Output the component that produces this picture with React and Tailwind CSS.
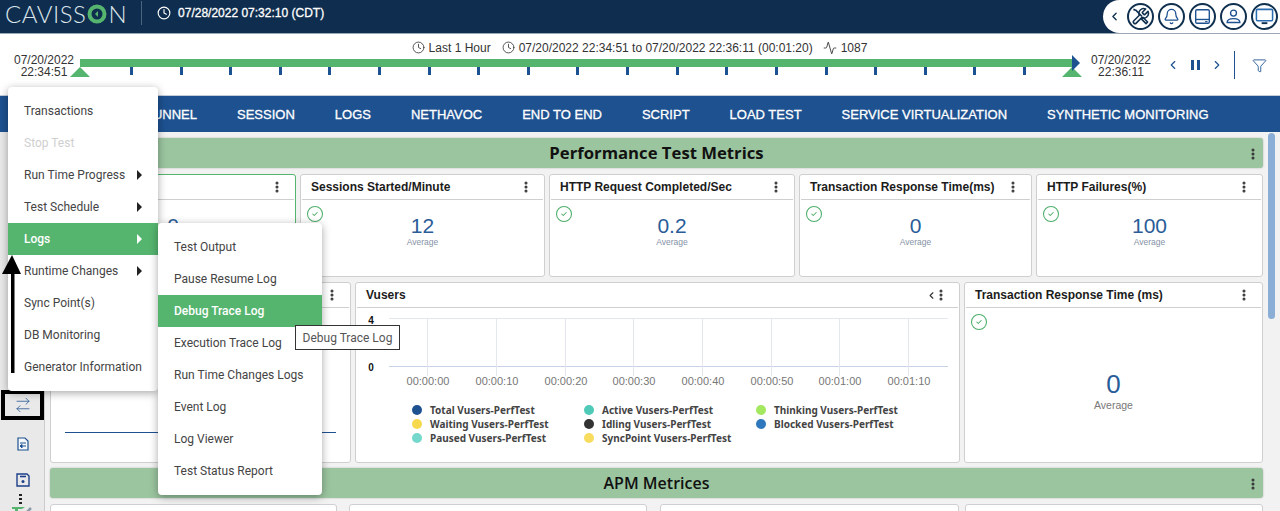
import { Activity, Bell, ChevronLeft, ChevronRight, CircleCheck, Clock, EllipsisVertical, Funnel, ArrowRightLeft } from "lucide-react";

const navItems = ["TUNNEL", "SESSION", "LOGS", "NETHAVOC", "END TO END", "SCRIPT", "LOAD TEST", "SERVICE VIRTUALIZATION", "SYNTHETIC MONITORING"];
const mainMenu = [
  { label: "Transactions" },
  { label: "Stop Test", disabled: true },
  { label: "Run Time Progress", arrow: true },
  { label: "Test Schedule", arrow: true },
  { label: "Logs", arrow: true, active: true },
  { label: "Runtime Changes", arrow: true },
  { label: "Sync Point(s)" },
  { label: "DB Monitoring" },
  { label: "Generator Information" },
];
const logMenu = [
  { label: "Test Output" },
  { label: "Pause Resume Log" },
  { label: "Debug Trace Log", active: true },
  { label: "Execution Trace Log" },
  { label: "Run Time Changes Logs" },
  { label: "Event Log" },
  { label: "Log Viewer" },
  { label: "Test Status Report" },
];
const legend = [
  ["Total Vusers-PerfTest", "bg-[#1d5190]"],
  ["Active Vusers-PerfTest", "bg-[#4fc9b8]"],
  ["Thinking Vusers-PerfTest", "bg-[#a4e85f]"],
  ["Waiting Vusers-PerfTest", "bg-[#f7d94e]"],
  ["Idling Vusers-PerfTest", "bg-[#333333]"],
  ["Blocked Vusers-PerfTest", "bg-[#2f78bd]"],
  ["Paused Vusers-PerfTest", "bg-[#74d8cc]"],
  ["SyncPoint Vusers-PerfTest", "bg-[#f7dc60]"],
];
const gridX = [426, 495, 564, 632, 701, 770, 838, 907];
const times = ["00:00:00", "00:00:10", "00:00:20", "00:00:30", "00:00:40", "00:00:50", "00:01:00", "00:01:10"];

const Dots = ({ className = "" }) => (
  <EllipsisVertical size={14} strokeWidth={3.2} className={"text-[#333] " + className} />
);

const Card = ({ title, width, height, green, children, extra }) => (
  <div className={`${width} ${height} shrink-0 bg-white rounded-[3px] border overflow-hidden ${green ? "border-[#55b56f]" : "border-[#cfcfcf]"}`}>
    <div className="h-[25px] mx-px flex items-center justify-between pl-[9px] pr-[10px] border-b border-[#cfcfcf]">
      <span className="text-xs font-bold text-[#1c1c1c] whitespace-nowrap">{title}</span>
      <div className="flex items-center">
        {extra}
        <Dots />
      </div>
    </div>
    {children}
  </div>
);

const Metric = ({ title, value, width, green }) => (
  <Card title={title} width={width} height="h-[103px]" green={green}>
    <div className="relative h-[76px] flex flex-col items-center pt-[14px]">
      <CircleCheck size={18} strokeWidth={1.4} className="absolute left-[5px] top-[5px] text-[#4cae6a]" />
      <span className="text-[21px] leading-[24px] text-[#2a5c98]">{value}</span>
      <span className="text-[8.500px] leading-[10px] mt-[-1px] text-[#8592a6]">Average</span>
    </div>
  </Card>
);

const SectionBar = ({ title, bold }) => (
  <div className="relative h-[30px] shrink-0 rounded-[3px] bg-[#9bc59f] flex items-center justify-center shadow-[0_0_2px_rgba(0,0,0,0.25)]">
    <span className={`font-['Open_Sans',sans-serif] text-[#111] ${bold ? "font-bold text-[16.700px]" : "font-semibold text-base"}`}>{title}</span>
    <Dots className="absolute right-[3px] top-[9px]" />
  </div>
);

const MenuList = ({ items, className }) => (
  <div className={"absolute z-20 bg-white rounded-[4px] py-2 shadow-[0_2px_8px_rgba(0,0,0,0.35)] font-['Roboto',sans-serif] text-xs " + className}>
    {items.map((item) => (
      <div
        key={item.label}
        className={`h-8 flex items-center justify-between pl-4 pr-4 whitespace-nowrap ${item.active ? "bg-[#55b56f] text-white font-medium" : item.disabled ? "text-[#cfcfcf]" : "text-[#444]"}`}
      >
        <span>{item.label}</span>
        {item.arrow && <span className={`w-0 h-0 border-y-[5px] border-y-transparent border-l-[5px] ${item.active ? "border-l-white" : "border-l-[#222]"}`} />}
      </div>
    ))}
  </div>
);

const Round = ({ children }) => (
  <div className="w-[27px] h-[27px] rounded-full border-2 border-[#10304f] flex items-center justify-center">{children}</div>
);

const Header = () => (
  <header className="h-[34px] shrink-0 bg-[#0f2d4e] border-b border-[#9aa7b5] flex items-start text-white">
    <div className="ml-[5px] h-[28px] flex items-center font-['Lato',sans-serif] font-light text-[24px] tracking-[0.5px] text-[#dbe6ea] leading-[28px] whitespace-nowrap">
      <span>CAVISS</span>
      <svg width="20" height="20" viewBox="0 0 20 20" className="mx-[1px] shrink-0">
        <circle cx="10" cy="10" r="7.500" fill="none" stroke="#55b56f" strokeWidth="4" />
        <circle cx="10" cy="10" r="3.500" fill="#0f2d4e" />
        <path d="M11 7l-3 3 3 3z" fill="#55b56f" />
      </svg>
      <span>N</span>
    </div>
    <div className="ml-[14px] mt-px w-px h-6 bg-[#4b6480]" />
    <Clock size={14} strokeWidth={2} className="ml-[15px] mt-[6px]" />
    <span className="ml-[7px] mt-[5px] text-xs leading-[16px] [-webkit-text-stroke:0.3px_white]">07/28/2022 07:32:10 (CDT)</span>
    <div className="ml-auto h-[33px] pl-[5px] pr-[2px] bg-white rounded-l-[17px] flex items-center gap-1">
      <ChevronLeft size={13} strokeWidth={2.5} className="text-[#10304f] mr-[2px]" />
      <Round>
        <svg width="19" height="19" viewBox="0 0 24 24" fill="none" stroke="#10304f" strokeWidth="2" strokeLinejoin="round">
          <path d="M14.7 6.3a1 1 0 0 0 0 1.4l1.6 1.6a1 1 0 0 0 1.4 0l3.77-3.77a6 6 0 0 1-7.94 7.94l-6.91 6.91a2.12 2.12 0 0 1-3-3l6.91-6.91a6 6 0 0 1 7.94-7.94l-3.76 3.76z" />
          <path d="M3 3l3 1 8 8M15 13l6 6-2 2-6-6z" />
        </svg>
      </Round>
      <Round>
        <Bell size={17} strokeWidth={1.8} className="text-[#1d5190]" />
      </Round>
      <Round>
        <svg width="17" height="17" viewBox="0 0 20 20" fill="none" stroke="#1d5190" strokeWidth="1.6">
          <rect x="2" y="2" width="16" height="16" rx="1.500" />
          <path d="M2 13.500h16" />
          <path d="M13 16h3" strokeWidth="1.2" />
        </svg>
      </Round>
      <Round>
        <svg width="17" height="17" viewBox="0 0 20 20" fill="none" stroke="#1d5190" strokeWidth="1.6">
          <circle cx="10" cy="6" r="3.500" />
          <path d="M2.500 17c0-3 3-4.500 7.500-4.500s7.500 1.500 7.500 4.500z" />
        </svg>
      </Round>
      <Round>
        <svg width="19" height="19" viewBox="0 0 20 20" fill="none" stroke="#2a6cb0" strokeWidth="1.6">
          <rect x="1.500" y="2.500" width="17" height="12" rx="1" />
          <path d="M7 17h6" stroke="#10304f" strokeWidth="2" />
        </svg>
      </Round>
    </div>
  </header>
);

const Timeline = () => (
  <section className="relative h-[62px] shrink-0 bg-white border-b border-[#c4ccd6] text-xs text-[#333]">
    <div className="h-6 pt-[3px] pr-[1px] flex items-center justify-center">
      <Clock size={13} strokeWidth={1.5} />
      <span className="ml-[4px]">Last 1 Hour</span>
      <Clock size={13} strokeWidth={1.5} className="ml-[11px]" />
      <span className="ml-[4px]">07/20/2022 22:34:51 to 07/20/2022 22:36:11 (00:01:20)</span>
      <Activity size={14} strokeWidth={1.5} className="ml-[10px]" />
      <span className="ml-[4px]">1087</span>
    </div>
    <div className="flex items-start">
      <div className="w-[80px] pl-[8px] text-center leading-[12px] mt-[-4px]">07/20/2022<br />22:34:51</div>
      <div className="relative w-[992px] mt-px">
        <div className="h-2 bg-[#55b56f]" />
        <div className="flex justify-between pl-[50px] pr-[46px]">
          {Array.from({ length: 19 }).map((_, i) => (
            <span key={i} className="w-[3px] h-2 bg-[#1d5190]" />
          ))}
        </div>
        <span className="absolute left-[-10px] top-[8px] w-0 h-0 border-x-[10px] border-x-transparent border-b-[10px] border-b-[#55b56f]" />
        <span className="absolute right-[-10px] top-[8px] w-0 h-0 border-x-[10px] border-x-transparent border-b-[10px] border-b-[#55b56f]" />
        <span className="absolute right-[-8px] top-[-4px] w-0 h-0 border-y-[8px] border-y-transparent border-l-[8px] border-l-[#1d5190]" />
      </div>
      <div className="w-[98px] text-center leading-[12px] mt-[-4px]">07/20/2022<br />22:36:11</div>
      <div className="flex items-center text-[#1d5190] ml-[-4px] h-[14px]">
        <ChevronLeft size={14} strokeWidth={2} />
        <span className="ml-[11px] w-[3px] h-[10px] bg-[#1d5190]" />
        <span className="ml-[3px] w-[3px] h-[10px] bg-[#1d5190]" />
        <ChevronRight size={14} strokeWidth={2} className="ml-[10px]" />
      </div>
      <div className="ml-[10px] mt-[-7px] w-px h-7 bg-[#1d5190]" />
      <Funnel size={15} strokeWidth={1.4} className="ml-[17px] text-[#1d5190]" />
    </div>
  </section>
);

const VusersChart = () => (
  <Card title="Vusers" width="w-[605px]" height="h-[181px]" extra={<ChevronLeft size={11} strokeWidth={2.5} className="text-[#333] mr-[-3px]" />}>
    <svg width="603" height="100" viewBox="355 308 603 100" className="block">
      <path d="M388 318.500H947" stroke="#e3e6ec" />
      <path d="M388 366.500H947" stroke="#c5d2e8" />
      {gridX.map((x) => (
        <path key={x} d={`M${x + 0.5} 318V376`} stroke="#e3e6ec" />
      ))}
      <text x="370" y="324" fontSize="10" fill="#111" textAnchor="middle" fontWeight="bold">4</text>
      <text x="370" y="371" fontSize="10" fill="#111" textAnchor="middle" fontWeight="bold">0</text>
      {times.map((t, i) => (
        <text key={t} x={gridX[i] + 1} y="385" fontSize="11" fill="#777" textAnchor="middle">{t}</text>
      ))}
    </svg>
    <div className="grid grid-cols-[172px_172px_172px] gap-y-1 pl-[56px] mt-[-3px] font-['Noto_Sans',sans-serif] font-bold text-[10px] leading-[10px] text-[#444]">
      {legend.map(([name, color]) => (
        <div key={name} className="flex items-center gap-[8px] whitespace-nowrap">
          <span className={`w-[10px] h-[10px] rounded-full ${color}`} />
          {name}
        </div>
      ))}
    </div>
  </Card>
);

const Sidebar = () => (
  <aside className="w-[45px] shrink-0 bg-[#e9e9e9] border-r border-[#cccccc] pt-[258px] flex flex-col">
    <div className="ml-px w-[43px] h-[30px] shrink-0 border-4 border-black flex items-center justify-center text-[#1d5190]">
      <ArrowRightLeft size={18} strokeWidth={1} />
    </div>
    <svg width="12" height="14" viewBox="0 0 12 14" fill="#f4f7fb" stroke="#1d5190" strokeWidth="1.2" className="ml-[17px] mt-[17px] shrink-0">
      <path d="M1 1h7l3 3v9H1z" />
      <path d="M3 6h6M3 9l2-1.500V11zM9 9H5" fill="#1d5190" strokeWidth="1" />
    </svg>
    <svg width="14" height="14" viewBox="0 0 14 14" fill="none" stroke="#1d3f8a" strokeWidth="1.4" className="ml-[16px] mt-[22px] shrink-0">
      <path d="M1 1h10l2 2v10H1z" />
      <path d="M4 3.500h6" strokeWidth="1.6" />
      <circle cx="7" cy="8.500" r="1.500" fill="#1d3f8a" stroke="none" />
    </svg>
    <div className="ml-[19px] mt-[7px] flex flex-col gap-[2px] shrink-0">
      <span className="w-[3px] h-[2px] bg-[#222]" />
      <span className="w-[3px] h-[2px] bg-[#222]" />
      <span className="w-[3px] h-[2px] bg-[#222]" />
    </div>
    <svg width="22" height="8" viewBox="0 0 22 8" className="ml-[11px] mt-[2px] shrink-0">
      <path d="M1 1h13l-3 2H7v4H4V3H1z" fill="#55b56f" />
      <path d="M15 7l5-5" stroke="#8a9aa8" strokeWidth="2.500" />
    </svg>
  </aside>
);

export default function App() {
  return (
    <div className="relative w-[1280px] h-[511px] overflow-hidden flex flex-col font-['Liberation_Sans',Arial,sans-serif]">
      <Header />
      <Timeline />
      <nav className="h-9 shrink-0 bg-[#1d5190] pt-px flex items-center pl-[145px] gap-10 text-[13px] text-white [-webkit-text-stroke:0.3px_white]">
        {navItems.map((item) => (
          <span key={item} className="whitespace-nowrap">{item}</span>
        ))}
      </nav>
      <div className="flex flex-1 min-h-0 bg-[#f2f2f2]">
        <Sidebar />
        <main className="flex-1 pl-[5px] pt-[6px] flex flex-col gap-[5px] min-w-0">
          <SectionBar title="Performance Test Metrics" bold />
          <div className="flex gap-[4px] mt-px">
            <Metric title="" value="0" width="w-[246px]" green />
            <Metric title="Sessions Started/Minute" value="12" width="w-[245px]" />
            <Metric title="HTTP Request Completed/Sec" value="0.2" width="w-[246px]" />
            <Metric title="Transaction Response Time(ms)" value="0" width="w-[233px]" />
            <Metric title="HTTP Failures(%)" value="100" width="w-[227px]" />
          </div>
          <div className="flex gap-[4px]">
            <Card title="" width="w-[301px]" height="h-[181px]">
              <div className="mx-[14px] mt-[124px] h-px bg-[#1d5190]" />
            </Card>
            <VusersChart />
            <Card title="Transaction Response Time (ms)" width="w-[299px]" height="h-[181px]">
              <div className="relative h-[155px] flex flex-col items-center pt-[60px]">
                <CircleCheck size={18} strokeWidth={1.4} className="absolute left-[5px] top-[5px] text-[#4cae6a]" />
                <span className="text-[26px] leading-[32px] text-[#2a5c98]">0</span>
                <span className="text-[10.500px] leading-[12px] mt-[-1px] text-[#777]">Average</span>
              </div>
            </Card>
          </div>
          <SectionBar title="APM Metrices" />
          <div className="flex mt-px">
            <div className="w-[287px] h-10 shrink-0 bg-white border border-[#cfcfcf] rounded-[3px]" />
            <div className="ml-[12px] w-[298px] h-10 shrink-0 bg-white border border-[#cfcfcf] rounded-[3px]" />
            <div className="ml-[13px] w-[299px] h-10 shrink-0 bg-white border border-[#cfcfcf] rounded-[3px]" />
            <div className="ml-[6px] w-[298px] h-10 shrink-0 bg-white border border-[#cfcfcf] rounded-[3px]" />
          </div>
        </main>
        <div className="w-[17px] shrink-0 pl-[5px] pt-[1px]">
          <div className="w-[7px] h-[186px] rounded-full bg-[#8aaed6]" />
        </div>
      </div>

      <MenuList items={mainMenu} className="left-[8px] top-[87px] w-[150px]" />
      <MenuList items={logMenu} className="left-[158px] top-[223px] w-[164px]" />
      <div className="absolute z-30 left-[295px] top-[325px] h-[25px] w-[105px] bg-white border border-[#333] flex items-center justify-center font-['Roboto',sans-serif] text-xs text-[#555]">
        Debug Trace Log
      </div>
      <svg width="24" height="120" viewBox="0 0 24 120" className="absolute z-30 left-0 top-[255px]">
        <path d="M12 0L21 19H2z" fill="#000" />
        <path d="M11 18h3.500v100H11z" fill="#000" />
      </svg>
    </div>
  );
}
